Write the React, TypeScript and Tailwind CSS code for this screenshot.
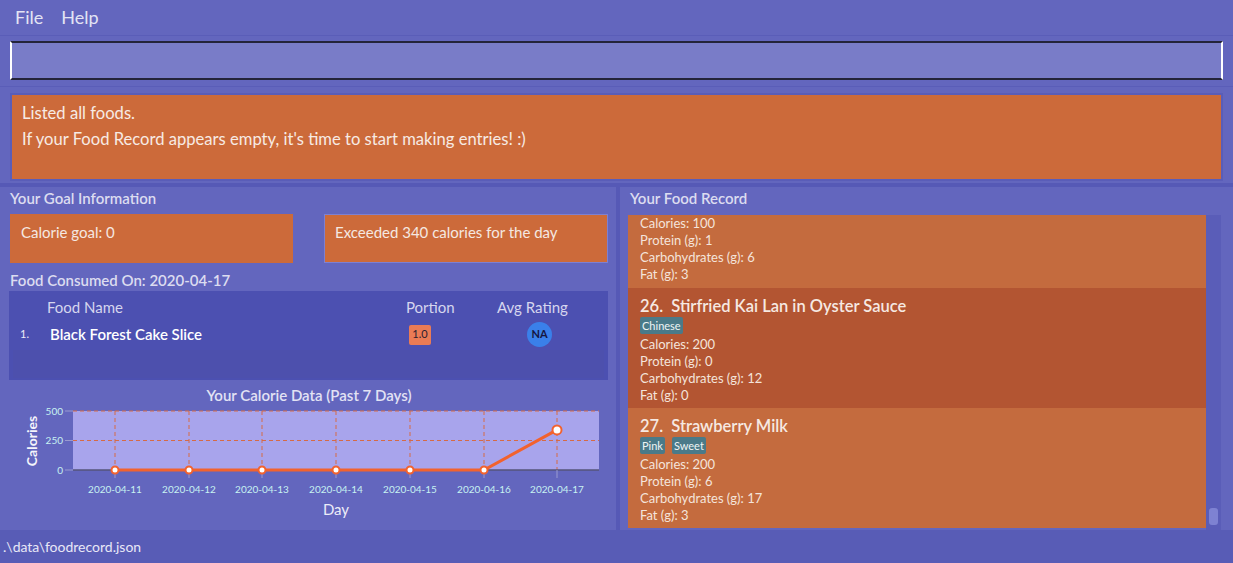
import React from "react";

type Food = {
  index?: number;
  name?: string;
  tags?: string[];
  calories: number;
  protein: number;
  carbs: number;
  fat: number;
  selected?: boolean;
};

const foods: Food[] = [
  { calories: 100, protein: 1, carbs: 6, fat: 3 },
  {
    index: 26,
    name: "Stirfried Kai Lan in Oyster Sauce",
    tags: ["Chinese"],
    calories: 200,
    protein: 0,
    carbs: 12,
    fat: 0,
    selected: true,
  },
  {
    index: 27,
    name: "Strawberry Milk",
    tags: ["Pink", "Sweet"],
    calories: 200,
    protein: 6,
    carbs: 17,
    fat: 3,
  },
];

const days = [
  "2020-04-11",
  "2020-04-12",
  "2020-04-13",
  "2020-04-14",
  "2020-04-15",
  "2020-04-16",
  "2020-04-17",
];
const dayX = [115, 189, 262, 336, 410, 484, 557];
const dayCalories = [0, 0, 0, 0, 0, 0, 340];

function CalorieChart() {
  // plot area: x 73..599, y 6..65 (0..500 calories)
  const toY = (c: number) => 65 - (c / 500) * 59;
  const points = dayX.map((x, i) => `${x},${toY(dayCalories[i])}`).join(" ");

  return (
    <svg width="610" height="122" className="block">
      <rect x="73" y="6" width="526" height="59" fill="#a8a4ec" />
      {[6, 35.5].map((y) => (
        <line key={y} x1="73" x2="599" y1={y} y2={y} stroke="#d66a45" strokeDasharray="4 3" strokeWidth="1" />
      ))}
      {dayX.map((x) => (
        <line key={x} x1={x} x2={x} y1="6" y2="65" stroke="#d66a45" strokeDasharray="4 3" strokeWidth="1" />
      ))}
      <line x1="73" x2="599" y1="65" y2="65" stroke="#55557a" strokeWidth="1.5" />
      {[6, 35.5, 65].map((y) => (
        <line key={y} x1="65" x2="73" y1={y} y2={y} stroke="#9a9ad0" strokeWidth="1" />
      ))}
      {dayX.map((x) => (
        <line key={x} x1={x} x2={x} y1="65" y2="73" stroke="#9a9ad0" strokeWidth="1" />
      ))}
      {[
        ["500", 6],
        ["250", 35.5],
        ["0", 65],
      ].map(([t, y]) => (
        <text key={t} x="63" y={Number(y) + 3.5} textAnchor="end" fontSize="10" fill="#c8f2f2">
          {t}
        </text>
      ))}
      {days.map((d, i) => (
        <text key={d} x={dayX[i]} y="88" textAnchor="middle" fontSize="10" fill="#c8f2f2">
          {d}
        </text>
      ))}
      <polyline points={points} fill="none" stroke="#f2622e" strokeWidth="3" />
      {dayX.map((x, i) => (
        <circle
          key={x}
          cx={x}
          cy={toY(dayCalories[i])}
          r={i === 6 ? 4.5 : 3.5}
          fill="#ffffff"
          stroke="#f2622e"
          strokeWidth="2"
        />
      ))}
      <text x="37" y="36" transform="rotate(-90 37 36)" textAnchor="middle" fontSize="14" fontWeight="700" fill="#f4f4fb">
        Calories
      </text>
      <text x="336" y="110" textAnchor="middle" fontSize="15" fill="#ececf8">
        Day
      </text>
    </svg>
  );
}

function FoodCard({ food }: { food: Food }) {
  return (
    <div
      className={`pl-[12px] ${food.name ? "pt-[9px] pb-[4px]" : "pt-0 pb-[5px]"} ${
        food.selected ? "bg-[#b35532]" : "bg-[#c46b3e]"
      }`}
    >
      {food.name && (
        <div className="text-[16.5px] leading-[18px] font-semibold text-[#f6e9e2]">
          {food.index}.&nbsp;&nbsp;{food.name}
        </div>
      )}
      {food.tags && (
        <div className="flex gap-[7px] mt-[2px] mb-[2px]">
          {food.tags.map((t) => (
            <span
              key={t}
              className="bg-[#4a7a89] text-[#eef4f4] text-[11px] leading-[17px] px-[2px] rounded-[2px]"
            >
              {t}
            </span>
          ))}
        </div>
      )}
      <div className="text-[13px] leading-[17px] text-[#f4e4db]">
        <div>Calories: {food.calories}</div>
        <div>Protein (g): {food.protein}</div>
        <div>Carbohydrates (g): {food.carbs}</div>
        <div>Fat (g): {food.fat}</div>
      </div>
    </div>
  );
}

export default function App() {
  return (
    <div
      className="w-[1233px] h-[563px] overflow-hidden flex flex-col bg-[#6366be] text-[#dcdcf0]"
      style={{ fontFamily: "Lato, 'Open Sans', sans-serif" }}
    >
      {/* menu */}
      <div className="h-[36px] flex items-center gap-[18px] px-[15px] text-[18px] text-[#e4e4f4] border-b border-[#5a5db8]">
        <span>File</span>
        <span>Help</span>
      </div>

      {/* command box */}
      <div className="pt-[5px] pb-[6px] px-[10px] border-b border-[#5a5db8]">
        <div className="h-[39px] bg-[#797cc8] border-y-2 border-y-[#24243a] border-x-2 border-x-white" />
      </div>

      {/* result display */}
      <div className="pt-[6px] pb-[2px] px-[10px] border-b-[4px] border-[#5659b6]">
        <div className="border-2 border-[#5a5db8] bg-[#cc6a3a] h-[88px] pt-[5px] pl-[10px] text-[16.6px] leading-[26px] text-[#f7ebe4]">
          <div>Listed all foods.</div>
          <div>If your Food Record appears empty, it's time to start making entries! :)</div>
        </div>
      </div>

      <div className="flex flex-1 min-h-0">
        {/* left panel */}
        <div className="w-[616px] flex flex-col">
          <div className="pl-[10px] pr-[8px]">
            <div className="text-[15px] leading-[20px] font-semibold pt-[1px]">Your Goal Information</div>
            <div className="flex justify-between mt-[6px] text-[15px] text-[#f5e8e1]">
              <div className="w-[283px] h-[49px] bg-[#cc6a3a] pl-[11px] pt-[7px]">Calorie goal: 0</div>
              <div className="w-[284px] h-[49px] bg-[#cc6a3a] border border-[#7d80d2] pl-[10px] pt-[6px]">
                Exceeded 340 calories for the day
              </div>
            </div>
            <div className="text-[15px] leading-[20px] font-semibold mt-[7px]">Food Consumed On: 2020-04-17</div>
            <div className="mt-[1px] -ml-[1px] h-[89px] bg-[#4c50b1] flex flex-col">
              <div className="flex text-[15px] text-[#d6d6ee] pt-[5px] h-[30px]">
                <div className="w-[38px]" />
                <div className="w-[359px]">Food Name</div>
                <div className="w-[91px]">Portion</div>
                <div>Avg Rating</div>
              </div>
              <div className="flex items-center h-[26px]">
                <div className="w-[38px] pl-[11px] text-[11px] text-[#ececf8]">1.</div>
                <div className="w-[359px] pl-[3px] text-[15px] font-semibold text-white">Black Forest Cake Slice</div>
                <div className="w-[91px] pl-[3px] -mt-[3px]">
                  <span className="inline-flex items-center justify-center w-[22px] h-[20px] bg-[#ea7b55] text-[#2d2030] text-[11px] rounded-[2px]">
                    1.0
                  </span>
                </div>
                <div className="pl-[30px]">
                  <span className="flex items-center justify-center w-[25px] h-[25px] rounded-full bg-[#3a80ea] text-[#161640] text-[11px] font-bold">
                    NA
                  </span>
                </div>
              </div>
              <div className="flex-1 mt-[3px] mx-[4px] mb-[2px] bg-[#4d50ad]" />
            </div>
          </div>
          <div className="text-center text-[15px] leading-[20px] font-semibold text-[#e2e2f4] mt-[5px] pl-[2px]">
            Your Calorie Data (Past 7 Days)
          </div>
          <CalorieChart />
        </div>

        <div className="w-[4px] bg-[#5659b6]" />

        {/* right panel */}
        <div className="flex-1 flex flex-col min-h-0 pl-[8px] pr-[12px]">
          <div className="text-[15px] leading-[20px] font-semibold pt-[1px] pl-[2px]">Your Food Record</div>
          <div className="flex flex-1 min-h-0 mt-[7px] overflow-hidden">
            <div className="flex-1 flex flex-col">
              {foods.map((f, i) => (
                <FoodCard key={i} food={f} />
              ))}
            </div>
            <div className="w-[15px] bg-[#5a5db8] flex flex-col justify-end items-center pb-[5px]">
              <div className="w-[9px] h-[17px] rounded-[3px] bg-[#7e82d2]" />
            </div>
          </div>
        </div>
      </div>

      {/* status bar */}
      <div className="h-[33px] bg-[#585cb6] flex items-center pl-[3px] text-[14px] text-[#e8e8f6]">
        .\data\foodrecord.json
      </div>
    </div>
  );
}
